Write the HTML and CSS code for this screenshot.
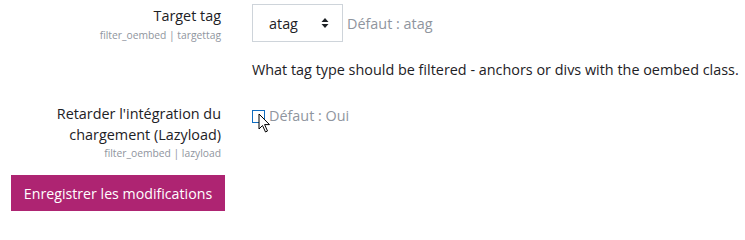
FILE: index.html
```html
<!DOCTYPE html>
<html lang="fr">
<head>
<meta charset="utf-8">
<title>Réglages filter_oembed</title>
<link rel="stylesheet" href="styles.css">
</head>
<body>
<form class="settings">
  <div class="row row-target">
    <div class="label">
      <div class="title">Target tag</div>
      <div class="key">filter_oembed | targettag</div>
    </div>
    <div class="field">
      <div class="ctrl">
        <div class="select">
          <span>atag</span>
          <svg class="arrows" width="8" height="12" viewBox="0 0 8 12"><path d="M0.5 5 L4 1 L7.5 5 Z M0.5 7 L4 11 L7.5 7 Z" fill="#1d2125"/></svg>
        </div>
        <span class="default">Défaut : atag</span>
      </div>
      <div class="desc">What tag type should be filtered - anchors or divs with the oembed class.</div>
    </div>
  </div>
  <div class="row row-lazy">
    <div class="label">
      <div class="title">Retarder l'intégration du chargement (Lazyload)</div>
      <div class="key">filter_oembed | lazyload</div>
    </div>
    <div class="field">
      <div class="ctrl check-ctrl">
        <span class="checkbox"></span>
        <span class="default">Défaut : Oui</span>
        <svg class="cursor" width="14" height="21" viewBox="0 0 14 21"><path d="M1 1 L1 16 L4.5 12.5 L7.5 19 L9.5 18 L6.6 11.6 L11.5 11.6 Z" fill="#fff" stroke="#000" stroke-width="1" stroke-linejoin="round"/></svg>
      </div>
    </div>
  </div>
  <div class="actions">
    <button type="button" class="btn">Enregistrer les modifications</button>
  </div>
</form>
</body>
</html>
```
FILE: styles.css
```css
html, body {
  margin: 0;
  padding: 0;
  background: #fff;
}
body {
  font-family: "Open Sans", "Noto Sans", sans-serif;
  font-size: 14.4px;
  color: #1d2125;
}
.settings {
  padding: 0 0 0 11px;
}
.row {
  display: grid;
  grid-template-columns: 210px 1fr;
  column-gap: 31px;
}
.label {
  text-align: right;
}
.title {
  font-size: 14.4px;
  line-height: 21px;
}
.key {
  font-size: 10.3px;
  line-height: 16px;
  color: #8f959e;
}
.row-target .label {
  padding-top: 5px;
}
.row-target .key {
  margin-top: 1px;
}
.ctrl {
  display: flex;
  align-items: center;
}
.row-target .ctrl {
  padding-top: 4px;
}
.select {
  box-sizing: border-box;
  width: 91px;
  height: 38px;
  border: 1px solid #ced4da;
  display: flex;
  align-items: center;
  justify-content: space-between;
  padding: 0 13px 0 16px;
  color: #1d2125;
  font-size: 14.4px;
}
.arrows {
  display: block;
}
.default {
  color: #8f959e;
  font-size: 14.4px;
  margin-left: 4px;
}
.desc {
  margin-top: 17px;
  line-height: 22px;
}
.row-lazy {
  margin-top: 22px;
}
.check-ctrl {
  position: relative;
  padding-top: 2px;
  line-height: 22px;
}
.checkbox {
  box-sizing: border-box;
  width: 13px;
  height: 13px;
  border: 1.5px solid #0f6cbf;
  background: #fff;
}
.cursor {
  position: absolute;
  left: 6px;
  top: 10px;
}
.actions {
  margin-top: 14px;
}
.btn {
  font-family: inherit;
  font-size: 14.2px;
  color: #fff;
  background: #ae2472;
  border: none;
  border-radius: 0;
  width: 214px;
  height: 36px;
  padding: 0;
}
```
